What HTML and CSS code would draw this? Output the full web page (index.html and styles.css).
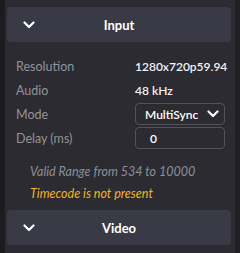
FILE: index.html
```html
<!DOCTYPE html>
<html lang="en">
<head>
    <meta charset="UTF-8">
    <meta name="viewport" content="width=device-width, initial-scale=1.0">
    <title>Input Settings</title>
    <link rel="stylesheet" href="styles.css">
</head>
<body>
    <div class="frame">
        <div class="edge"></div>
        <div class="panel">
            <!-- Input section -->
            <div class="section-head">
                <svg class="chev" width="12" height="8" viewBox="0 0 12 8"><path d="M1.5 1.5 L6 6 L10.5 1.5" fill="none" stroke="#fff" stroke-width="2.2" stroke-linecap="round" stroke-linejoin="round"/></svg>
                <span>Input</span>
            </div>

            <div class="rows">
                <div class="row">
                    <span class="label">Resolution</span>
                    <span class="value">1280x720p59.94</span>
                </div>
                <div class="row">
                    <span class="label">Audio</span>
                    <span class="value">48 kHz</span>
                </div>
                <div class="row">
                    <span class="label">Mode</span>
                    <div class="box select">
                        <span>MultiSync</span>
                        <svg width="12" height="8" viewBox="0 0 12 8"><path d="M1.5 1.5 L6 6 L10.5 1.5" fill="none" stroke="#fff" stroke-width="2.2" stroke-linecap="round" stroke-linejoin="round"/></svg>
                    </div>
                </div>
                <div class="row">
                    <span class="label">Delay (ms)</span>
                    <div class="box field">
                        <span>0</span>
                    </div>
                </div>
            </div>

            <div class="notes">
                <p class="note">Valid Range from 534 to 10000</p>
                <p class="note warn">Timecode is not present</p>
            </div>

            <!-- Video section -->
            <div class="section-head">
                <svg class="chev" width="12" height="8" viewBox="0 0 12 8"><path d="M1.5 1.5 L6 6 L10.5 1.5" fill="none" stroke="#fff" stroke-width="2.2" stroke-linecap="round" stroke-linejoin="round"/></svg>
                <span>Video</span>
            </div>
        </div>
        <div class="edge-right"></div>
    </div>
</body>
</html>
```

FILE: styles.css
```css
body{
    margin: 0;
    background-color: #26262b;
    font-family: "Lato", "Noto Sans", sans-serif;
    font-size: 12.5px;
}
.frame{
    display: flex;
    height: 253px;
    overflow: hidden;
}
.edge{
    width: 5px;
    background-color: #1c1c20;
}
.edge-right{
    width: 5px;
    background-color: #1f1f23;
    border-left: 2px solid #2b2b31;
}
.panel{
    flex: 1;
    background-color: #2b2b31;
    padding: 7px 2px 0 2px;
}
.section-head{
    position: relative;
    height: 35px;
    background-color: #3a3a46;
    border-radius: 4px;
    display: flex;
    align-items: center;
    justify-content: center;
    color: #fff;
    font-weight: 700;
    font-size: 13px;
}
.chev{
    position: absolute;
    left: 16px;
    top: 14px;
}
.rows{
    padding: 12px 0 0 9px;
}
.row{
    display: grid;
    grid-template-columns: 119px 90px;
    align-items: center;
    height: 24px;
}
.label{
    color: #939399;
}
.value{
    color: #f2f2f4;
    font-weight: 600;
    font-size: 12px;
}
.box{
    height: 20px;
    border: 1px solid #52525b;
    border-radius: 4px;
    display: flex;
    align-items: center;
    justify-content: space-between;
    padding: 0 5px 0 9px;
    color: #fff;
    font-weight: 600;
    font-size: 12px;
}
.box.field{
    padding-left: 14px;
}
.notes{
    padding: 11px 0 5px 23px;
}
.note{
    margin: 0;
    height: 22px;
    line-height: 22px;
    font-style: italic;
    color: #8f8f96;
}
.note.warn{
    color: #f2b422;
}
```
